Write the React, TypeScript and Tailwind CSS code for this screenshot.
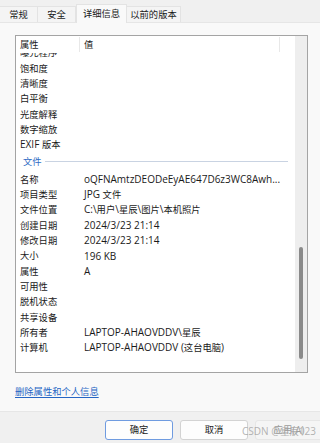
const cjk = /([\u2e80-\u9fff\uff00-\uffef]+)/;

function T({ s }: { s: string }) {
  const parts = s.split(cjk);
  return (
    <>
      {parts.map((p, i) =>
        i % 2 ? (
          <span key={i} className="text-[9.3px]">
            {p}
          </span>
        ) : (
          p
        )
      )}
    </>
  );
}

type Row = { label: string; value?: string } | { group: string };

const rows: Row[] = [
  { label: "曝光程序" },
  { label: "饱和度" },
  { label: "清晰度" },
  { label: "白平衡" },
  { label: "光度解释" },
  { label: "数字缩放" },
  { label: "EXIF 版本" },
  { group: "文件" },
  { label: "名称", value: "oQFNAmtzDEODeEyAE647D6z3WC8Awh..." },
  { label: "项目类型", value: "JPG 文件" },
  { label: "文件位置", value: "C:\\用户\\星辰\\图片\\本机照片" },
  { label: "创建日期", value: "2024/3/23 21:14" },
  { label: "修改日期", value: "2024/3/23 21:14" },
  { label: "大小", value: "196 KB" },
  { label: "属性", value: "A" },
  { label: "可用性" },
  { label: "脱机状态" },
  { label: "共享设备" },
  { label: "所有者", value: "LAPTOP-AHAOVDDV\\星辰" },
  { label: "计算机", value: "LAPTOP-AHAOVDDV (这台电脑)" },
];

function Tab({ label, active }: { label: string; active?: boolean }) {
  if (active) {
    return (
      <div className="w-[51px] h-[19px] -mb-px z-10 bg-[#f9f9f9] border border-b-0 border-[#e3e3e3] flex items-start justify-center pt-[2px] text-[#1a1a1a]">
        <T s={label} />
      </div>
    );
  }
  return (
    <div className="h-[16px] bg-[#f4f4f4] border-r border-t border-[#e3e3e3] flex items-center justify-center text-[#1a1a1a]">
      <T s={label} />
    </div>
  );
}

export default function App() {
  return (
    <div
      className="relative w-[320px] h-[443px] overflow-hidden bg-[#f0f0f0] text-[10px] leading-[14px] text-[#1a1a1a]"
      style={{ fontFamily: '"Open Sans", "Noto Sans CJK SC", sans-serif' }}
    >
      {/* tabs */}
      <div className="h-[22px] flex items-end">
        <div className="w-[38px]">
          <Tab label="常规" />
        </div>
        <div className="w-[38px]">
          <Tab label="安全" />
        </div>
        <Tab label="详细信息" active />
        <div className="w-[54px]">
          <Tab label="以前的版本" />
        </div>
      </div>

      {/* panel */}
      <div className="h-[390px] bg-[#f9f9f9] border-t border-b border-[#e6e6e6] pt-[12px] pl-[15px]">
        <div className="w-[293px] h-[338px] bg-white border border-[#a4a4a4] flex">
          <div className="flex-1 flex flex-col overflow-hidden">
            <div className="h-[17px] flex shrink-0 bg-white relative z-10">
              <div className="w-[64px] pl-[4px] border-r border-[#e8e8e8] flex items-center my-px">
                <T s="属性" />
              </div>
              <div className="w-[200px] pl-[4px] border-r border-[#e8e8e8] flex items-center my-px">
                <T s="值" />
              </div>
            </div>
            <div className="-mt-[8px]">
              {rows.map((r, i) =>
                "group" in r ? (
                  <div key={i} className="h-[19px] flex items-center pl-[7px] pr-[7px] gap-[3px]">
                    <span className="text-[#2f6bc4]">
                      <T s={r.group} />
                    </span>
                    <div className="flex-1 h-px bg-[#c9d3e2]" />
                  </div>
                ) : (
                  <div key={i} className="h-[15.35px] flex items-center whitespace-nowrap">
                    <div className="w-[68px] pl-[4px] shrink-0">
                      <T s={r.label} />
                    </div>
                    <div>{r.value && <T s={r.value} />}</div>
                  </div>
                )
              )}
            </div>
          </div>
          <div className="w-[12px] bg-[#eeeeee] flex flex-col">
            <div className="h-[211px]" />
            <div className="ml-[4px] w-[4px] h-[112px] rounded-full bg-[#8a8a8a]" />
          </div>
        </div>
        <div className="mt-[11px]">
          <span className="text-[#2565c4] underline underline-offset-2 decoration-[#2565c4]">
            <T s="删除属性和个人信息" />
          </span>
        </div>
      </div>

      {/* buttons */}
      <div className="flex gap-[7px] pl-[105px] pt-[8px]">
        <button className="w-[68px] h-[20px] shrink-0 rounded-[3px] border border-[#6f9be0] bg-[#fdfdfd] flex items-center justify-center text-[#1a1a1a]">
          <T s="确定" />
        </button>
        <button className="w-[68px] h-[20px] shrink-0 rounded-[3px] border border-[#d3d3d3] bg-[#fdfdfd] flex items-center justify-center text-[#1a1a1a]">
          <T s="取消" />
        </button>
        <button className="w-[68px] h-[20px] shrink-0 rounded-[3px] border border-[#e6e6e6] bg-[#f5f5f5] flex items-center justify-center text-[#9c9c9c]">
          <T s="应用(A)" />
        </button>
      </div>

      {/* watermark */}
      <div className="absolute left-[242px] top-[424px] text-[10px] text-[#a0a0a0]/80 whitespace-nowrap pointer-events-none">
        CSDN @<T s="星辰" />123
      </div>
    </div>
  );
}
